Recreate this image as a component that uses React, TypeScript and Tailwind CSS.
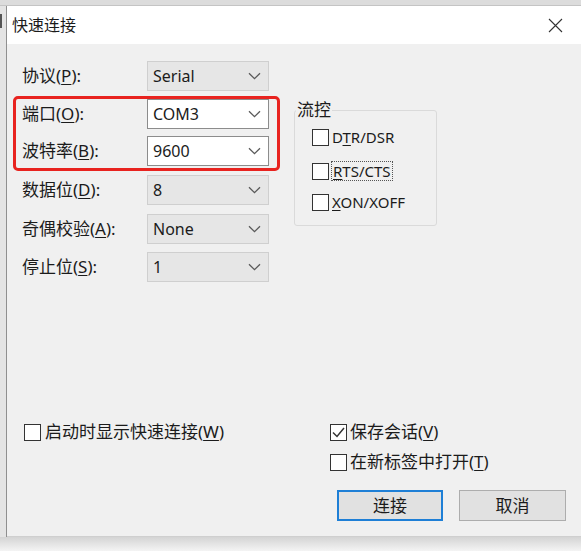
import clsx from 'clsx';

function Chevron() {
  return (
    <svg width="13" height="8" viewBox="0 0 13 8" fill="none">
      <path d="M1 1.2l5.5 5.5 5.5-5.5" stroke="#5a5a5a" strokeWidth="1.3" />
    </svg>
  );
}

function Combo({ value, editable }: { value: string; editable?: boolean }) {
  return (
    <div
      className={clsx(
        'flex h-[30px] w-[122px] items-center justify-between pl-[5px] pr-[7px] text-[16px]',
        editable ? 'border border-[#8c8c8c] bg-white' : 'border border-[#cfcfcf] bg-[#e6e6e6]'
      )}
    >
      <span>{value}</span>
      <Chevron />
    </div>
  );
}

function Key({ k }: { k: string }) {
  return <span className="underline underline-offset-2">{k}</span>;
}

function Row({ label, k, value, editable }: { label: string; k: string; value: string; editable?: boolean }) {
  return (
    <div className="flex items-center">
      <div className="w-[125px] text-[17px]">
        {label}(<Key k={k} />):
      </div>
      <Combo value={value} editable={editable} />
    </div>
  );
}

function Box({ checked }: { checked?: boolean }) {
  return (
    <div className="flex h-[17px] w-[17px] shrink-0 items-center justify-center border-[1.5px] border-[#333] bg-white">
      {checked && (
        <svg width="13" height="11" viewBox="0 0 13 11" fill="none">
          <path d="M1 5.5l4 4L12 1" stroke="#333" strokeWidth="1.5" />
        </svg>
      )}
    </div>
  );
}

export default function App() {
  return (
    <div className="h-[551px] w-[581px] overflow-hidden bg-[#ececec] font-['Noto_Sans','Noto_Sans_CJK_SC',sans-serif] text-[#1b1b1b]">
      <div className="h-[6px] border-b border-[#c4c4c4] bg-[#dcdcdc]" />
      <div className="flex h-[531px]">
        <div className="w-[7px] border-r border-[#8f8f8f] bg-[#e4e4e4] pt-[8px]">
          <div className="h-[14px] w-[2px] bg-[#555]" />
        </div>
        <div className="flex flex-1 flex-col">
          <div className="flex h-[38px] items-center justify-between bg-white pl-[5px] pr-[18px]">
            <span className="text-[16px]">快速连接</span>
            <svg width="15" height="15" viewBox="0 0 15 15" fill="none">
              <path d="M1 1l13 13M14 1L1 14" stroke="#333" strokeWidth="1.1" />
            </svg>
          </div>
          <div className="flex flex-1 flex-col border-b border-[#cfcfcf] bg-[#f0f0f0] pb-[15px]">
            <div className="flex pl-[15px] pt-[17px]">
              <div className="flex w-[247px] flex-col">
                <Row label="协议" k="P" value="Serial" />
                <div className="-mb-[5px] -ml-[9px] -mr-[11px] mt-[5px] rounded-[5px] border-[3px] border-[#e8231f] pb-[2px] pl-[6px] pr-[8px]">
                  <Row label="端口" k="O" value="COM3" editable />
                  <div className="mt-[7px]">
                    <Row label="波特率" k="B" value="9600" editable />
                  </div>
                </div>
                <div className="mt-[9px]">
                  <Row label="数据位" k="D" value="8" />
                </div>
                <div className="mt-[9px]">
                  <Row label="奇偶校验" k="A" value="None" />
                </div>
                <div className="mt-[8px]">
                  <Row label="停止位" k="S" value="1" />
                </div>
              </div>
              <fieldset className="ml-[25px] mt-[38px] h-[127px] w-[143px] rounded-[3px] border border-[#dadada] pl-[17px] pt-[6px]">
                <legend className="-ml-[16px] px-[1px] text-[17px] leading-[22px]">流控</legend>
                <div className="flex flex-col text-[15px] leading-[20px]">
                  <div className="flex h-[20px] items-center gap-[3px]">
                    <Box />
                    <span>
                      D<Key k="T" />R/DSR
                    </span>
                  </div>
                  <div className="mt-[14px] flex h-[20px] items-center gap-[2px]">
                    <Box />
                    <span className="border border-dotted border-[#555] px-[1px] leading-[18px]">
                      <Key k="R" />TS/CTS
                    </span>
                  </div>
                  <div className="mt-[11px] flex h-[20px] items-center gap-[3px]">
                    <Box />
                    <span>
                      <Key k="X" />ON/XOFF
                    </span>
                  </div>
                </div>
              </fieldset>
            </div>
            <div className="flex-1" />
            <div className="flex items-start text-[17px] leading-[22px]">
              <div className="ml-[17px] flex w-[306px] items-center gap-[4px]">
                <Box />
                <span>
                  启动时显示快速连接(<Key k="W" />)
                </span>
              </div>
              <div className="flex flex-col">
                <div className="flex items-center gap-[3px]">
                  <Box checked />
                  <span>
                    保存会话(<Key k="V" />)
                  </span>
                </div>
                <div className="mt-[8px] flex items-center gap-[3px]">
                  <Box />
                  <span>
                    在新标签中打开(<Key k="T" />)
                  </span>
                </div>
                <div className="ml-[7px] mt-[17px] flex gap-[16px]">
                  <button className="h-[31px] w-[106px] border-2 border-[#1e7fd6] bg-[#e1e1e1] text-[17px]">连接</button>
                  <button className="h-[31px] w-[107px] border border-[#adadad] bg-[#e1e1e1] text-[17px]">取消</button>
                </div>
              </div>
            </div>
          </div>
        </div>
      </div>
      <div className="h-[14px] bg-gradient-to-b from-[#d4d4d4] to-[#f4f4f4]" />
    </div>
  );
}
